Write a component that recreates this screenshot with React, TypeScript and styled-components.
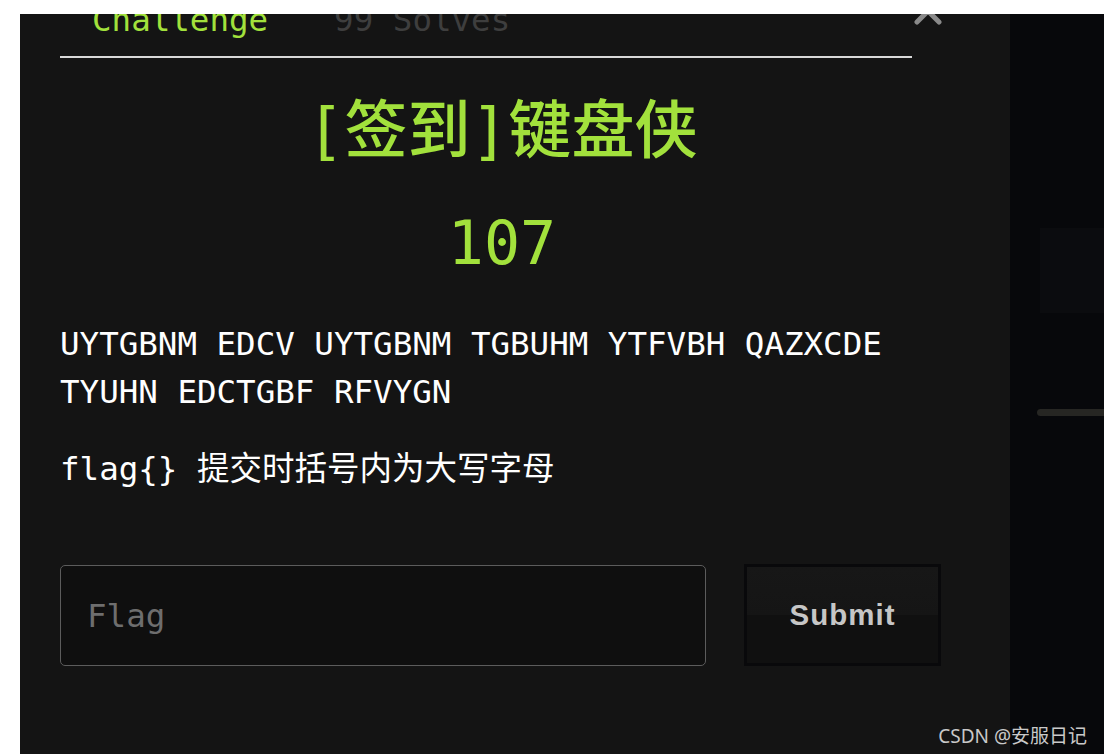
import React from "react";
import styled, { createGlobalStyle } from "styled-components";

const GlobalStyle = createGlobalStyle`
  html, body {
    margin: 0;
    padding: 0;
    background: #ffffff;
  }
  * { box-sizing: border-box; }
`;

const MONO = `"DejaVu Sans Mono", "Noto Sans CJK SC", monospace`;
const GREEN = "#a2e13c";

const Page = styled.div`
  position: relative;
  display: flex;
  width: 1104px;
  height: 754px;
  padding: 14px 0 0 20px;
  overflow: hidden;
`;

const Panel = styled.div`
  width: 990px;
  height: 740px;
  background: #141414;
  overflow: hidden;
  padding: 0 66px 0 40px;
  font-family: ${MONO};
`;

const Header = styled.div`
  display: flex;
  align-items: flex-start;
  margin-top: -14px;
`;

const Tabs = styled.ul`
  flex: 1;
  display: flex;
  gap: 2px;
  margin: 0;
  padding: 0;
  list-style: none;
  border-bottom: 2px solid #d8d8d8;
`;

const Tab = styled.li<{ $active?: boolean }>`
  padding: 0 32px 16px;
  font-size: 32.5px;
  line-height: 40px;
  color: ${(p) => (p.$active ? GREEN : "#3e3e3e")};
  white-space: nowrap;
`;

const Close = styled.button`
  width: 32px;
  height: 28px;
  padding: 0;
  border: 0;
  background: transparent;
  display: flex;
  align-items: center;
  justify-content: center;
  margin-top: -3px;
`;

const Title = styled.h1`
  margin: 33px 0 0;
  text-align: center;
  font-size: 63px;
  line-height: 80px;
  font-weight: 500;
  color: ${GREEN};
`;

const Points = styled.div`
  margin-top: 36px;
  text-align: center;
  font-size: 60px;
  line-height: 72px;
  color: ${GREEN};
`;

const Desc = styled.p`
  margin: 41px 0 0;
  font-size: 32.5px;
  line-height: 48px;
  color: #ffffff;
`;

const Note = styled.p`
  margin: 29px 0 0;
  font-size: 32.5px;
  line-height: 48px;
  color: #ffffff;
`;

const Form = styled.form`
  display: flex;
  gap: 38px;
  margin-top: 71px;
  align-items: flex-start;
`;

const FlagInput = styled.input`
  width: 646px;
  height: 101px;
  margin-top: 1px;
  padding: 0 0 0 26px;
  background: #0f0f0f;
  border: 1px solid #5c5c5c;
  border-radius: 5px;
  color: #eee;
  font-family: ${MONO};
  font-size: 32.5px;
  outline: none;
  &::placeholder {
    color: #6e6e6e;
  }
`;

const SubmitButton = styled.button`
  width: 197px;
  height: 102px;
  border: 3px solid #09090b;
  background: linear-gradient(#171717 0%, #151515 50%, #101010 50%, #101010 100%);
  color: #c6c6c6;
  font-family: "Liberation Sans", Arial, sans-serif;
  font-weight: bold;
  font-size: 29.5px;
  letter-spacing: 1px;
  padding: 0;
`;

const Strip = styled.div`
  flex: 1;
  background: #07080b;
  display: flex;
  flex-direction: column;
  align-items: flex-end;
  padding-top: 214px;
`;

const Ghost = styled.div`
  width: 64px;
  height: 85px;
  background: #0b0c0f;
`;

const Slider = styled.div`
  width: 67px;
  height: 7px;
  margin-top: 96px;
  background: #262623;
  border-radius: 4px 0 0 4px;
`;

const Watermark = styled.div`
  position: absolute;
  right: 17px;
  bottom: 6px;
  font-family: "Noto Sans", "Noto Sans CJK SC", sans-serif;
  font-size: 19px;
  line-height: 24px;
  color: #c9c9c9;
`;

export default function App() {
  return (
    <>
      <GlobalStyle />
      <Page>
        <Panel>
          <Header>
            <Tabs>
              <Tab $active>Challenge</Tab>
              <Tab>99 Solves</Tab>
            </Tabs>
            <Close aria-label="close">
              <svg width="28" height="28" viewBox="0 0 28 28">
                <path d="M3 3 L25 25 M25 3 L3 25" stroke="#8a8a8a" strokeWidth="5" strokeLinecap="round" />
              </svg>
            </Close>
          </Header>
          <Title>[签到]键盘侠</Title>
          <Points>107</Points>
          <Desc>UYTGBNM EDCV UYTGBNM TGBUHM YTFVBH QAZXCDE TYUHN EDCTGBF RFVYGN</Desc>
          <Note>flag{"{}"} 提交时括号内为大写字母</Note>
          <Form onSubmit={(e) => e.preventDefault()}>
            <FlagInput placeholder="Flag" />
            <SubmitButton type="submit">Submit</SubmitButton>
          </Form>
        </Panel>
        <Strip>
          <Ghost />
          <Slider />
        </Strip>
        <Watermark>CSDN @安服日记</Watermark>
      </Page>
    </>
  );
}
